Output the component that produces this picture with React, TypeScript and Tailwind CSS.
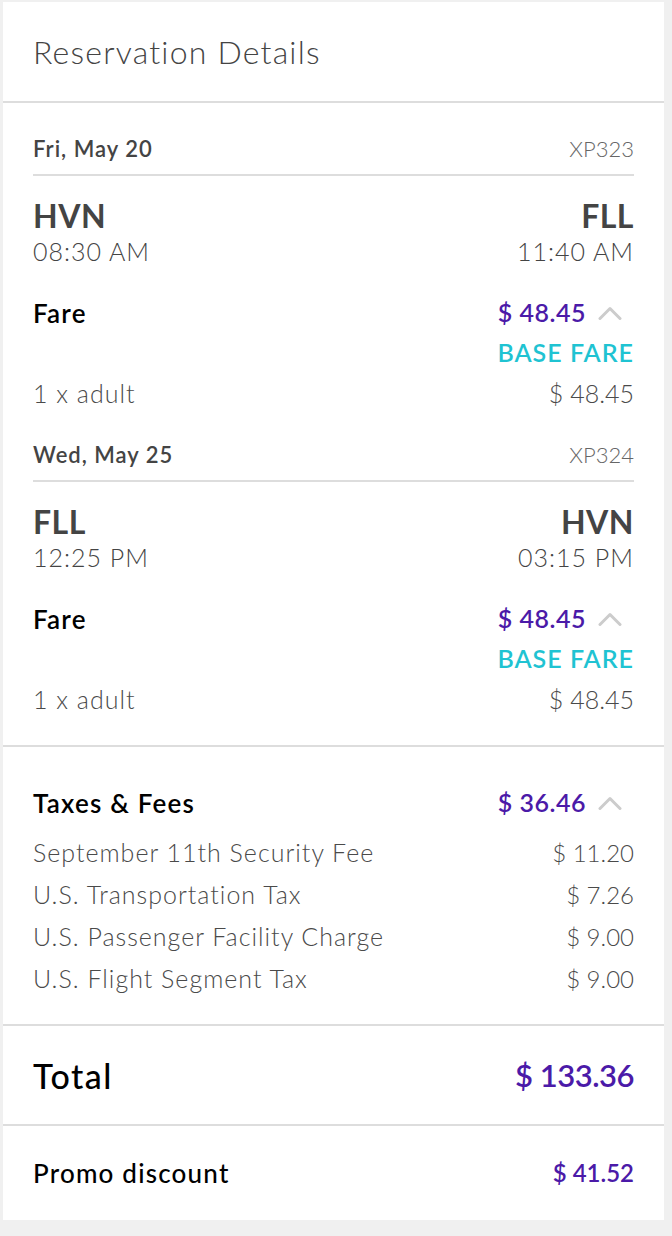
import React from "react";

const font = { fontFamily: "Lato, 'Noto Sans', sans-serif" };

function Chevron() {
  return (
    <svg width="24" height="14" viewBox="0 0 24 14" className="ml-[12px] mr-[12px]" fill="none">
      <path d="M2 12.5 L12 2.5 L22 12.5" stroke="#cccccc" strokeWidth="3" strokeLinecap="round" strokeLinejoin="round" />
    </svg>
  );
}

function Leg(props: { date: string; code: string; from: string; to: string; dep: string; arr: string; first?: boolean }) {
  return (
    <div>
      <div className={`flex items-center justify-between h-[34px] ${props.first ? "" : "mt-[22px]"}`}>
        <span className="text-[22px] font-semibold text-[#444] tracking-[1px]">{props.date}</span>
        <span className="text-[22px] font-light text-[#666]">{props.code}</span>
      </div>
      <div className="mt-[9px] h-[2px] bg-[#dddddd]" />
      <div className="mt-[22px] flex items-center justify-between h-[36px]">
        <span className="text-[32px] font-bold text-[#444] tracking-[0.5px]">{props.from}</span>
        <span className="text-[32px] font-bold text-[#444] tracking-[0.5px]">{props.to}</span>
      </div>
      <div className="flex items-center justify-between h-[36px]">
        <span className="text-[25px] font-light text-[#444] tracking-[1px]">{props.dep}</span>
        <span className="text-[25px] font-light text-[#444] tracking-[1px]">{props.arr}</span>
      </div>
      <div className="mt-[23px] flex items-center justify-between h-[40px]">
        <span className="text-[26px] font-semibold text-black tracking-[1.2px]">Fare</span>
        <span className="flex items-center">
          <span className="text-[25px] font-semibold text-[#4b1aa8] tracking-[0.5px]">$ 48.45</span>
          <Chevron />
        </span>
      </div>
      <div className="flex items-center justify-end h-[40px]">
        <span className="text-[25px] font-semibold text-[#1fc3d2] uppercase tracking-[1px]">Base Fare</span>
      </div>
      <div className="flex items-center justify-between h-[42px]">
        <span className="text-[25px] font-light text-[#4a4a4a] tracking-[1px]">1 x adult</span>
        <span className="text-[25px] font-light text-[#4a4a4a]">$ 48.45</span>
      </div>
    </div>
  );
}

export default function App() {
  const fees = [
    ["September 11th Security Fee", "$ 11.20"],
    ["U.S. Transportation Tax", "$ 7.26"],
    ["U.S. Passenger Facility Charge", "$ 9.00"],
    ["U.S. Flight Segment Tax", "$ 9.00"],
  ];
  return (
    <div className="min-h-[1236px] bg-[#f0f0f0] pt-[2px] pl-[3px]" style={font}>
      <div className="w-[661px] bg-white">
        <div className="h-[101px] flex items-center px-[30px] border-b-2 border-[#dddddd]">
          <h1 className="text-[32px] font-light text-[#444] leading-none tracking-[1.2px]">Reservation Details</h1>
        </div>
        <div className="px-[30px] pt-[28px] pb-[24px] border-b-2 border-[#dddddd]">
          <Leg first date="Fri, May 20" code="XP323" from="HVN" to="FLL" dep="08:30 AM" arr="11:40 AM" />
          <Leg date="Wed, May 25" code="XP324" from="FLL" to="HVN" dep="12:25 PM" arr="03:15 PM" />
        </div>
        <div className="px-[30px] pt-[36px] pb-[24px] border-b-2 border-[#dddddd]">
          <div className="flex items-center justify-between h-[40px]">
            <span className="text-[26px] font-semibold text-black tracking-[1.2px]">Taxes &amp; Fees</span>
            <span className="flex items-center">
              <span className="text-[25px] font-semibold text-[#4b1aa8] tracking-[0.5px]">$ 36.46</span>
              <Chevron />
            </span>
          </div>
          <div className="mt-[9px]">
            {fees.map(([l, v]) => (
              <div key={l} className="flex items-center justify-between h-[42px]">
                <span className="text-[25px] font-light text-[#4a4a4a] tracking-[1px]">{l}</span>
                <span className="text-[24px] font-light text-[#4a4a4a]">{v}</span>
              </div>
            ))}
          </div>
        </div>
        <div className="h-[100px] px-[30px] flex items-center justify-between border-b-2 border-[#dddddd]">
          <span className="text-[34px] font-medium text-black tracking-[1.5px]">Total</span>
          <span className="text-[31px] font-semibold text-[#4b1aa8] tracking-[-0.5px]">$ 133.36</span>
        </div>
        <div className="h-[94px] px-[30px] flex items-center justify-between">
          <span className="text-[26px] font-medium text-black tracking-[1.2px]">Promo discount</span>
          <span className="text-[24px] font-semibold text-[#4b1aa8]">$ 41.52</span>
        </div>
      </div>
    </div>
  );
}
